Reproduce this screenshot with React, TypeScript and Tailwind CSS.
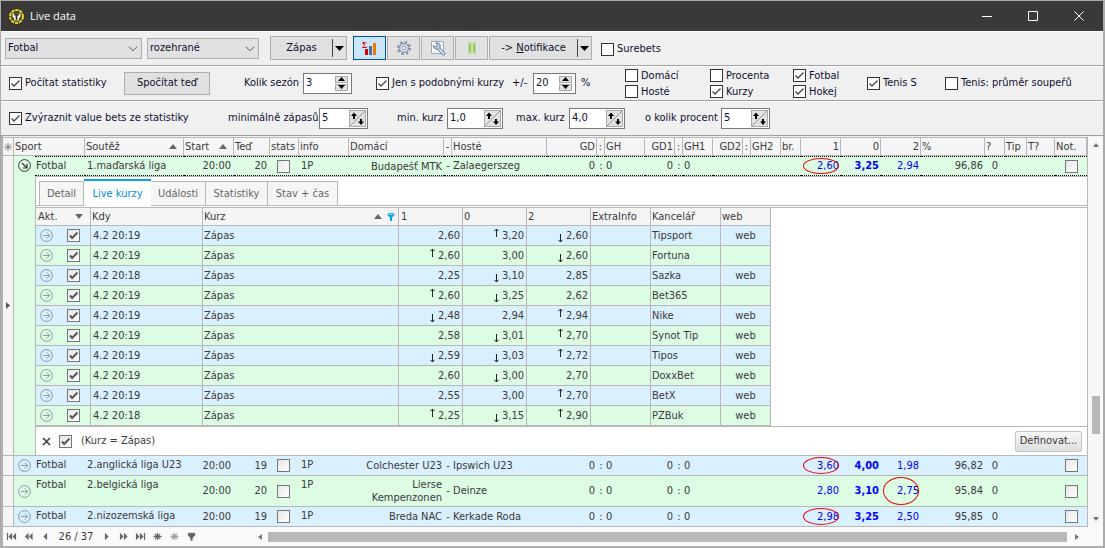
import type { ReactNode } from "react";

type Trend = "up" | "down" | "";

const columns = [
  { label: "Sport", width: "w-[50px]", align: "text-left" },
  { label: "Soutěž", width: "w-[99px]", align: "text-left", sort: true },
  { label: "Start", width: "w-[50px]", align: "text-left", sort: true },
  { label: "Teď", width: "w-[36px]", align: "text-left" },
  { label: "stats", width: "w-[29px]", align: "text-left" },
  { label: "info", width: "w-[50px]", align: "text-left" },
  { label: "Domácí", width: "w-[95px]", align: "text-left" },
  { label: "-", width: "w-[8px]", align: "text-center" },
  { label: "Hosté", width: "w-auto", align: "text-left" },
  { label: "GD", width: "w-[50px]", align: "text-right" },
  { label: ":", width: "w-[8px]", align: "text-center" },
  { label: "GH", width: "w-[40px]", align: "text-left" },
  { label: "GD1", width: "w-[30px]", align: "text-right" },
  { label: ":", width: "w-[8px]", align: "text-center" },
  { label: "GH1", width: "w-[30px]", align: "text-left" },
  { label: "GD2", width: "w-[30px]", align: "text-right" },
  { label: ":", width: "w-[8px]", align: "text-center" },
  { label: "GH2", width: "w-[30px]", align: "text-left" },
  { label: "br.", width: "w-[20px]", align: "text-left" },
  { label: "1", width: "w-[40px]", align: "text-right" },
  { label: "0", width: "w-[40px]", align: "text-right" },
  { label: "2", width: "w-[40px]", align: "text-right" },
  { label: "%", width: "w-[64px]", align: "text-left" },
  { label: "?", width: "w-[20px]", align: "text-left" },
  { label: "Tip", width: "w-[22px]", align: "text-left" },
  { label: "T?", width: "w-[28px]", align: "text-left" },
  { label: "Not.", width: "w-[32px]", align: "text-left" },
];

interface Match {
  league: string;
  minute: string;
  home: string;
  away: string;
  odds: [string, string, string];
  value: number;
  percent: string;
  height: string;
}

const selected: Match = {
  league: "1.maďarská liga",
  minute: "20",
  home: "Budapešť MTK",
  away: "Zalaegerszeg",
  odds: ["2,60", "3,25", "2,94"],
  value: 0,
  percent: "96,86",
  height: "h-[19px]",
};

const matches: Match[] = [
  { league: "2.anglická liga U23", minute: "19", home: "Colchester U23", away: "Ipswich U23", odds: ["3,60", "4,00", "1,98"], value: 0, percent: "96,82", height: "h-5" },
  { league: "2.belgická liga", minute: "20", home: "Lierse Kempenzonen", away: "Deinze", odds: ["2,80", "3,10", "2,75"], value: 2, percent: "95,84", height: "h-[31px]" },
  { league: "2.nizozemská liga", minute: "19", home: "Breda NAC", away: "Kerkade Roda", odds: ["2,98", "3,25", "2,50"], value: 0, percent: "95,85", height: "h-5" },
];

const prices: { time: string; odds: [string, Trend][]; office: string; web: boolean }[] = [
  { time: "4.2 20:19", odds: [["2,60", ""], ["3,20", "up"], ["2,60", "down"]], office: "Tipsport", web: true },
  { time: "4.2 20:19", odds: [["2,60", "up"], ["3,00", ""], ["2,60", "down"]], office: "Fortuna", web: false },
  { time: "4.2 20:18", odds: [["2,25", ""], ["3,10", "down"], ["2,85", ""]], office: "Sazka", web: true },
  { time: "4.2 20:19", odds: [["2,60", "up"], ["3,25", "down"], ["2,62", ""]], office: "Bet365", web: false },
  { time: "4.2 20:19", odds: [["2,48", "down"], ["2,94", ""], ["2,94", "up"]], office: "Nike", web: true },
  { time: "4.2 20:19", odds: [["2,58", ""], ["3,01", "down"], ["2,70", "up"]], office: "Synot Tip", web: true },
  { time: "4.2 20:19", odds: [["2,59", "down"], ["3,03", "down"], ["2,72", "up"]], office: "Tipos", web: true },
  { time: "4.2 20:19", odds: [["2,60", ""], ["3,00", "down"], ["2,70", ""]], office: "DoxxBet", web: true },
  { time: "4.2 20:19", odds: [["2,55", ""], ["3,00", ""], ["2,70", "up"]], office: "BetX", web: true },
  { time: "4.2 20:18", odds: [["2,25", "up"], ["3,15", "down"], ["2,90", "up"]], office: "PZBuk", web: true },
];

/* Controls */

function CheckBox({ label, checked = false }: { label: string; checked?: boolean }) {
  return (
    <label className="flex items-center gap-[3px] whitespace-nowrap">
      <span className="relative block size-[13px] shrink-0">
        <input type="checkbox" defaultChecked={checked} className="peer block size-[13px] appearance-none border border-[#333] bg-white" />
        <svg viewBox="0 0 13 13" className="pointer-events-none absolute inset-0 hidden peer-checked:block">
          <path d="M2.5 6.5 5 9l5.5-5.5" fill="none" stroke="#444" strokeWidth="1.3" />
        </svg>
      </span>
      {label}
    </label>
  );
}

function GridCheck({ label, checked = false }: { label: string; checked?: boolean }) {
  return (
    <span className="relative block size-[13px] shrink-0">
      <input
        type="checkbox"
        aria-label={label}
        defaultChecked={checked}
        className="peer block size-[13px] appearance-none border border-[#777] bg-gradient-to-br from-[#e6e6e6] to-white"
      />
      <svg viewBox="0 0 13 13" className="pointer-events-none absolute inset-0 hidden peer-checked:block">
        <path d="m3 6.5 2.2 2.5L10.5 3.5" fill="none" stroke="#555" strokeWidth="1.9" />
      </svg>
    </span>
  );
}

function Select({ label, value, width }: { label: string; value: string; width: string }) {
  return (
    <span className={`relative block ${width}`}>
      <select aria-label={label} className="h-[21px] w-full appearance-none border border-[#adadad] bg-[#e1e1e1] pl-[2px] pr-5">
        <option>{value}</option>
      </select>
      <svg viewBox="0 0 10 6" className="pointer-events-none absolute right-1 top-2 h-[6px] w-[10px]">
        <path d="m1 .8 4 4 4-4" fill="none" stroke="#555" />
      </svg>
    </span>
  );
}

function Spin({ label, value, width, diagonal = false }: { label: string; value: string; width: string; diagonal?: boolean }) {
  return (
    <span className={`flex h-[21px] shrink-0 border border-[#7a7a7a] bg-white ${width}`}>
      <input aria-label={label} defaultValue={value} className="h-[17px] w-full min-w-0 pl-[2px] outline-none" />
      {diagonal ? (
        <button aria-label="Změnit" className="mr-px mt-px h-[17px] w-[17px] shrink-0 border border-[#aaa] bg-[#e1e1e1]">
          <svg viewBox="0 0 15 15" className="block size-[15px]">
            <path d="M0 15 15 0" stroke="#999" />
            <path d="M4 8V4M11 8v4" stroke="#000" strokeWidth="2" />
            <path d="M1 5h6L4 1.5zM8 10.5h6L11 14z" />
          </svg>
        </button>
      ) : (
        <span className="mr-[3px] mt-[2px] flex w-[13px] shrink-0 flex-col gap-px">
          <button aria-label="Více" className="flex h-[7px] items-center justify-center border border-[#aaa] bg-[#e1e1e1]">
            <svg viewBox="0 0 7 4" className="h-1 w-[7px]"><path d="M0 4h7L3.5 0z" /></svg>
          </button>
          <button aria-label="Méně" className="flex h-[7px] items-center justify-center border border-[#aaa] bg-[#e1e1e1]">
            <svg viewBox="0 0 7 4" className="h-1 w-[7px]"><path d="M0 0h7L3.5 4z" /></svg>
          </button>
        </span>
      )}
    </span>
  );
}

function SplitButton({ children, width }: { children: ReactNode; width: string }) {
  return (
    <span className={`flex h-6 border border-[#adadad] bg-[#e1e1e1] ${width}`}>
      <button className="flex-1">{children}</button>
      <button aria-label="Rozbalit" className="my-[2px] flex w-[14px] items-center justify-center border-l border-[#444]">
        <svg viewBox="0 0 9 5" className="h-[5px] w-[9px]"><path d="M0 0h9L4.5 5z" /></svg>
      </button>
    </span>
  );
}

function ToolButton({ label, active = false, children }: { label: string; active?: boolean; children: ReactNode }) {
  return (
    <button
      aria-label={label}
      className={`flex h-6 w-[33px] items-center justify-center border ${active ? "border-[#005499] bg-[#cce4f7]" : "border-[#adadad] bg-[#e1e1e1]"}`}
    >
      {children}
    </button>
  );
}

/* Icons */

function SortArrow({ down = false }: { down?: boolean }) {
  return (
    <svg viewBox="0 0 8 5" className="h-[5px] w-2 shrink-0" fill="#666">
      <path d={down ? "M0 0h8L4 5z" : "M0 5h8L4 0z"} />
    </svg>
  );
}

function RowArrow({ open = false }: { open?: boolean }) {
  return (
    <svg viewBox="0 0 13 13" className={`size-[13px] shrink-0 ${open ? "text-[#333]" : "text-[#8a9ba3]"}`} fill="none" stroke="currentColor">
      <circle cx="6.5" cy="6.5" r="5.9" />
      {open ? <path d="m4 4 5 5M9 4.8V9H4.8" strokeWidth="1.2" /> : <path d="M3 6.5h6.5M6.8 3.5l3 3-3 3" />}
    </svg>
  );
}

function TrendArrow({ trend }: { trend: Trend }) {
  if (!trend) return null;
  return (
    <svg viewBox="0 0 5 9" className={`h-[9px] w-[5px] ${trend === "up" ? "mb-[6px]" : "mt-[6px]"}`} fill="none" stroke="#222">
      {trend === "up" ? <path d="M2.5 9V1M.3 3.3l2.2-2.3 2.2 2.3" /> : <path d="M2.5 0v8M.3 5.7 2.5 8l2.2-2.3" />}
    </svg>
  );
}

function NavButton({ label, d, faded = false }: { label: string; d: string; faded?: boolean }) {
  return (
    <button aria-label={label} className="flex w-[17px] justify-center">
      <svg viewBox="0 0 11 9" className={`h-[9px] w-[11px] ${faded ? "opacity-60" : ""}`} fill="#666" stroke="#666" strokeWidth=".2">
        <path d={d} />
      </svg>
    </button>
  );
}

const STAR = "M5 1h1v2.3L7.8 1.8l.7.7L7 4h2.5v1H7l1.5 1.5-.7.7L6 5.7V8H5V5.7L3.2 7.2l-.7-.7L4 5H1.5V4H4L2.5 2.5l.7-.7L5 3.3z";

function TitleBar() {
  return (
    <header className="flex h-[30px] items-center bg-[#393939] pl-[7px] pr-px text-white">
      <svg viewBox="0 0 17 17" className="size-[17px]">
        <circle cx="8.5" cy="8.5" r="8" fill="#2a2606" />
        <circle cx="8.5" cy="8.5" r="6.4" fill="none" stroke="#e6cf2e" strokeWidth="2.2" strokeDasharray="3.4 .6" />
        <circle cx="8.5" cy="8.5" r="5" fill="#4a4206" />
        <path d="M4.5 5.5h8v3.5l-1.500 1v2.500h-5V10L4.500 9z" fill="#fff" />
        <path d="M6 6.500h5M8.500 6.500v5.500" stroke="#333" strokeWidth="1.800" />
      </svg>
      <h1 className="ml-[5px] flex-1 font-['Open_Sans','Noto_Sans',sans-serif] text-[11px]">Live data</h1>
      {[
        ["Minimalizovat", "M0 5.5h10"],
        ["Maximalizovat", "M.5.5h9v9h-9z"],
        ["Zavřít", "M.5.5l9 9M9.5.5l-9 9"],
      ].map(([label, d]) => (
        <button key={label} aria-label={label} className="flex w-[46px] items-center justify-center">
          <svg viewBox="0 0 10 10" className="size-[10px]" fill="none" stroke="#fff"><path d={d} /></svg>
        </button>
      ))}
    </header>
  );
}

function Toolbar() {
  return (
    <div className="flex h-[35px] items-center border-b border-[#a0a0a0] pl-1 shadow-[inset_0_1px_0_#fff]">
      <Select label="Sport" value="Fotbal" width="w-[137px]" />
      <div className="ml-[5px]"><Select label="Stav" value="rozehrané" width="w-[112px]" /></div>
      <div className="ml-[11px]"><SplitButton width="w-[77px]">Zápas</SplitButton></div>
      <div className="ml-[6px] flex gap-px">
        <ToolButton label="Statistiky" active>
          <svg viewBox="0 0 15 15" className="size-[15px]">
            <text x="0" y="7" fontSize="8" fontWeight="bold" fill="#c00" fontFamily="Liberation Serif, serif">Σ</text>
            <path d="M3 8h3v6H3z" fill="#d00" />
            <path d="M7 5h3v9H7z" fill="#4472a8" />
            <path d="M11 2h3v12h-3z" fill="#f07800" />
          </svg>
        </ToolButton>
        <ToolButton label="Nastavení">
          <svg viewBox="0 0 16 16" className="size-4">
            <circle cx="8" cy="8" r="6" fill="none" stroke="#8392ab" strokeWidth="2.2" strokeDasharray="2.4 2.312" />
            <circle cx="8" cy="8" r="4.4" fill="#e6ebf2" stroke="#8392ab" strokeWidth="1.2" />
            <circle cx="8" cy="8" r="2" fill="#f4f4f4" stroke="#8392ab" />
          </svg>
        </ToolButton>
        <ToolButton label="Nástroje">
          <svg viewBox="0 0 16 16" className="size-4">
            <path d="M1.5 1.5h12v12h-12z" fill="#f6f8fb" stroke="#9aa9c0" />
            <path d="m8 8 5.5 5.5" stroke="#667b9e" strokeWidth="3.6" strokeLinecap="round" />
            <path d="m8 8 5.5 5.5" stroke="#dbe4f1" strokeWidth="1.8" strokeLinecap="round" />
            <path d="M6 2.8c2.5-.6 4.7 1.4 4.2 3.8C9.8 9.1 7 10 5 8.7 3.8 8 3.2 6.8 3.4 5.4l2.3 1.7 1.7-1.4z" fill="#c5d2e5" stroke="#667b9e" />
          </svg>
        </ToolButton>
        <ToolButton label="Pozastavit">
          <svg viewBox="0 0 8 12" className="h-3 w-2" fill="#94c45a" stroke="#b5d68c">
            <path d="M.5 1h2.500v10H.5zM5 1h2.500v10H5z" />
          </svg>
        </ToolButton>
        <SplitButton width="w-[103px]">-&gt; <u>N</u>otifikace</SplitButton>
      </div>
      <div className="ml-[9px] mt-[2px]"><CheckBox label="Surebets" /></div>
    </div>
  );
}

function StatsBar() {
  return (
    <div className="flex h-[35px] items-center whitespace-nowrap border-b border-[#a0a0a0] pl-2 shadow-[inset_0_1px_0_#fff]">
      <div className="w-[115px]"><CheckBox label="Počítat statistiky" checked /></div>
      <button className="h-[23px] w-[86px] border border-[#adadad] bg-[#e1e1e1]">Spočítat teď</button>
      <span className="ml-[34px] w-[59px]">Kolik sezón</span>
      <Spin label="Kolik sezón" value="3" width="w-[49px]" />
      <div className="ml-6 w-[136px]"><CheckBox label="Jen s podobnými kurzy" checked /></div>
      <span className="w-[21px]">+/-</span>
      <Spin label="Odchylka kurzu" value="20" width="w-[43px]" />
      <span className="ml-[5px] w-[44px]">%</span>
      <div className="grid w-[242px] grid-cols-[85px_83px_74px] gap-y-[3px] leading-[13px]">
        <CheckBox label="Domácí" />
        <CheckBox label="Procenta" />
        <CheckBox label="Fotbal" checked />
        <CheckBox label="Hosté" />
        <CheckBox label="Kurzy" checked />
        <CheckBox label="Hokej" checked />
      </div>
      <div className="w-[78px]"><CheckBox label="Tenis S" checked /></div>
      <CheckBox label="Tenis: průměr soupeřů" />
    </div>
  );
}

function ValueBar() {
  return (
    <div className="flex h-[35px] items-center whitespace-nowrap border-b border-[#a0a0a0] pl-2 shadow-[inset_0_1px_0_#fff]">
      <div className="w-[219px]"><CheckBox label="Zvýraznit value bets ze statistiky" checked /></div>
      <span className="w-[91px]">minimálně zápasů</span>
      <Spin label="minimálně zápasů" value="5" width="w-[49px]" diagonal />
      <span className="ml-[29px] w-[50px]">min. kurz</span>
      <Spin label="min. kurz" value="1,0" width="w-[56px]" diagonal />
      <span className="ml-[13px] w-[53px]">max. kurz</span>
      <Spin label="max. kurz" value="4,0" width="w-[56px]" diagonal />
      <span className="ml-[20px] w-[76px]">o kolik procent</span>
      <Spin label="o kolik procent" value="5" width="w-[49px]" diagonal />
    </div>
  );
}

/* Grid */

function OddsCell({ value, edge, bold = false, marked = false }: { value: string; edge: string; bold?: boolean; marked?: boolean }) {
  return (
    <td className={`relative pr-[2px] text-right text-[#0000ff] ${edge} ${bold ? "font-bold" : ""}`}>
      {value}
      {marked && <span className="absolute inset-x-[2px] inset-y-px rounded-[50%] border border-[#f00000]" />}
    </td>
  );
}

function MatchCells({ match, edge }: { match: Match; edge: string }) {
  return (
    <>
      <td className={`pl-px align-top leading-[18px] ${edge}`}>Fotbal</td>
      <td className={`pl-[2px] align-top leading-[18px] ${edge}`}>{match.league}</td>
      <td className={`pr-[3px] text-right ${edge}`}>20:00</td>
      <td className={`pr-[3px] text-right ${edge}`}>{match.minute}</td>
      <td className={`pl-[7px] ${edge}`}><GridCheck label="stats" /></td>
      <td className={`pl-[2px] align-top leading-[18px] ${edge}`}>1P</td>
      <td className={`whitespace-normal pr-[2px] text-right leading-[13px] ${edge}`}>{match.home}</td>
      <td className={`text-center ${edge}`}>-</td>
      <td className={`pl-px ${edge}`}>{match.away}</td>
      <td className={`pr-[2px] text-right ${edge}`}>0</td>
      <td className={`text-center ${edge}`}>:</td>
      <td className={`pl-px ${edge}`}>0</td>
      <td className={`pr-[2px] text-right ${edge}`}>0</td>
      <td className={`text-center ${edge}`}>:</td>
      <td className={`pl-px ${edge}`}>0</td>
      <td colSpan={4} className={edge} />
      {match.odds.map((value, i) => (
        <OddsCell key={i} value={value} edge={edge} bold={i === 1} marked={i === match.value} />
      ))}
      <td className={`pr-[2px] text-right ${edge}`}>{match.percent}</td>
      <td className={`text-center ${edge}`}>0</td>
      <td colSpan={2} className={edge} />
      <td className={`pl-[10px] ${edge}`}><GridCheck label="Not." /></td>
    </>
  );
}

function PriceTable() {
  const head = "border-b border-r border-[#b8b8b8] bg-[#f5f5f5] px-px text-left font-normal";
  const cell = "border-b border-r border-[#b8b8b8] px-px";
  return (
    <table className="w-[735px] table-fixed border-separate border-spacing-0">
      <thead>
        <tr className="h-[18px]">
          <th className={`w-[55px] ${head}`}>
            <span className="flex items-center justify-between pl-px pr-[6px]">Akt.<SortArrow down /></span>
          </th>
          <th className={`w-[112px] ${head}`}>Kdy</th>
          <th className={`w-[196px] ${head}`}>
            <span className="flex items-center gap-[5px] pr-[2px]">
              <span className="flex-1">Kurz</span>
              <SortArrow />
              <svg viewBox="0 0 8 8" className="size-2" fill="none" stroke="#00a2e8">
                <ellipse cx="4" cy="1.5" rx="3.4" ry="1" />
                <path d="m.6 1.8 2.9 2.7V8h1V4.500l2.900-2.700" fill="#00a2e8" />
              </svg>
            </span>
          </th>
          <th className={`w-[64px] pl-[2px] ${head}`}>1</th>
          <th className={`w-[64px] ${head}`}>0</th>
          <th className={`w-[64px] ${head}`}>2</th>
          <th className={`w-[60px] ${head}`}>ExtraInfo</th>
          <th className={`w-[70px] ${head}`}>Kancelář</th>
          <th className={`w-[50px] ${head}`}>web</th>
        </tr>
      </thead>
      <tbody>
        {prices.map((price) => (
          <tr key={price.office} className="h-5 odd:bg-[#d9f0ff] even:bg-[#dcfce4]">
            <td className={cell}>
              <span className="flex items-center gap-[14px] pl-[3px]">
                <RowArrow />
                <GridCheck label={price.office} checked />
              </span>
            </td>
            <td className={`pl-[2px] ${cell}`}>{price.time}</td>
            <td className={cell}>Zápas</td>
            {price.odds.map(([value, trend], i) => (
              <td key={i} className={cell}>
                <span className="flex h-[18px] items-center justify-end gap-[3px] pr-px">
                  <TrendArrow trend={trend} />
                  {value}
                </span>
              </td>
            ))}
            <td className={cell} />
            <td className={cell}>{price.office}</td>
            <td className={`text-center ${cell}`}>{price.web && <a href="#">web</a>}</td>
          </tr>
        ))}
      </tbody>
    </table>
  );
}

function Detail() {
  const tabs = [
    { name: "Detail", width: "w-[45px]" },
    { name: "Live kurzy", width: "w-[67px]" },
    { name: "Události", width: "w-[55px]" },
    { name: "Statistiky", width: "w-[62px]" },
    { name: "Stav + čas", width: "w-[70px]" },
  ];
  return (
    <div className="border-l border-[#b8b8b8] bg-white">
      <div role="tablist" className="flex h-[29px] items-end border-b border-[#b8b8b8] pl-[3px] text-[#666]">
        {tabs.map((tab, i) => (
          <button
            key={tab.name}
            role="tab"
            aria-selected={i === 1}
            className={
              i === 1
                ? `-mb-px h-[27px] border-t-2 border-[#00a2f0] bg-white text-[#0090d8] ${tab.width}`
                : `h-6 border-r border-t border-[#b8b8b8] bg-[#f5f5f5] first:border-l ${tab.width}`
            }
          >
            {tab.name}
          </button>
        ))}
      </div>
      <div className="mt-px border-b border-t border-[#b8b8b8]">
        <PriceTable />
      </div>
      <div className="flex h-[28px] items-center pl-[6px] pr-[5px]">
        <button aria-label="Zrušit filtr">
          <svg viewBox="0 0 9 9" className="size-[9px]" stroke="#444" strokeWidth="1.7"><path d="m1 1 7 7M8 1 1 8" /></svg>
        </button>
        <div className="ml-2"><GridCheck label="Filtr zapnutý" checked /></div>
        <span className="ml-[9px] flex-1">(Kurz = Zápas)</span>
        <button className="h-[21px] w-[67px] rounded-[2px] border border-[#c4c4c4] bg-gradient-to-b from-[#f6f6f6] to-[#dedede]">Definovat...</button>
      </div>
    </div>
  );
}

function MatchGrid() {
  const line = "border-b border-[#b8b8b8]";
  const focus = "border-y border-dotted border-black";
  return (
    <table className="w-full table-fixed border-separate border-spacing-0 whitespace-nowrap border-t border-[#b8b8b8] text-[#3a3a3a]">
      <colgroup>
        <col className="w-[11px]" />
        <col className="w-[21px]" />
        {columns.map((column, i) => (
          <col key={i} className={column.width} />
        ))}
      </colgroup>
      <thead>
        <tr className="h-[18px] bg-[#f5f5f5]">
          <th className={`border-r font-normal ${line}`}>
            <svg viewBox="0 0 9 9" className="mx-auto size-2" stroke="#666" strokeWidth=".8"><path d="M4.5 0v9M0 4.5h9M1.3 1.3l6.4 6.4M7.7 1.3 1.3 7.7" /></svg>
          </th>
          {columns.map((column, i) => (
            <th key={i} colSpan={i === 0 ? 2 : 1} className={`border-r px-px font-normal ${line} ${column.align}`}>
              {column.sort ? (
                <span className="flex items-center justify-between pr-[5px]">{column.label}<SortArrow /></span>
              ) : (
                column.label
              )}
            </th>
          ))}
        </tr>
      </thead>
      <tbody>
        <tr className={`bg-[#dcfce4] ${selected.height}`}>
          <td rowSpan={2} className={`border-r bg-[#f5f5f5] ${line}`}>
            <svg viewBox="0 0 4 7" className="mx-auto h-[7px] w-1" fill="#555"><path d="M0 0v7l4-3.5z" /></svg>
          </td>
          <td rowSpan={2} className={`pl-1 pt-[3px] align-top ${line}`}><RowArrow open /></td>
          <MatchCells match={selected} edge={focus} />
        </tr>
        <tr>
          <td colSpan={27} className={`border-t ${line}`}><Detail /></td>
        </tr>
        {matches.map((match) => (
          <tr key={match.league} className={`odd:bg-[#d9f0ff] even:bg-[#dcfce4] ${match.height}`}>
            <td className={`border-r bg-[#f5f5f5] ${line}`} />
            <td className={`pl-1 ${line}`}><RowArrow /></td>
            <MatchCells match={match} edge={line} />
          </tr>
        ))}
      </tbody>
    </table>
  );
}

function ScrollTrack() {
  return (
    <div className="flex w-4 shrink-0 flex-col items-center border-l border-[#b8b8b8] bg-[#f8f8f8] py-[6px]">
      <svg viewBox="0 0 6 4" className="h-1 w-[6px]" fill="#777"><path d="M0 4h6L3 0z" /></svg>
      <div className="grow-[247]" />
      <div className="h-[38px] w-2 bg-[#b8b8b8]" />
      <div className="grow-[83]" />
      <svg viewBox="0 0 6 4" className="h-1 w-[6px]" fill="#777"><path d="M0 0h6L3 4z" /></svg>
    </div>
  );
}

function Navigator() {
  return (
    <footer className="flex h-[19px] items-center bg-[#fafafa] text-[#3a3a3a]">
      <NavButton label="První" d="M1 1h1v7H1zM6 1v7L2.5 4.5zM10 1v7L6.5 4.5z" />
      <NavButton label="Předchozí strana" d="M5.5 1v7L2 4.5zM9.5 1v7L6 4.5z" />
      <NavButton label="Předchozí" d="M7 1v7L3.5 4.5z" />
      <span className="w-[44px] text-center">26 / 37</span>
      <NavButton label="Další" d="M4 1v7l3.5-3.5z" />
      <NavButton label="Další strana" d="M2 1v7l3.5-3.5zM6 1v7l3.5-3.5z" />
      <NavButton label="Poslední" d="M1 1v7l3.5-3.5zM5 1v7l3.5-3.5zM9 1h1v7H9z" />
      <NavButton label="Nový" d={STAR} />
      <NavButton label="Kopie" d={STAR} faded />
      <NavButton label="Filtr" d="M2 1h7v2.5L6.5 6v2.5h-2V6L2 3.5z" />
      <div className="ml-[58px] flex flex-1 items-center pr-[24px]">
        <svg viewBox="0 0 4 6" className="h-[6px] w-1" fill="#777"><path d="M4 0v6L0 3z" /></svg>
        <div className="ml-[6px] mr-2 h-[10px] flex-1 bg-[#b8b8b8]" />
        <svg viewBox="0 0 4 6" className="h-[6px] w-1" fill="#777"><path d="M0 0v6l4-3z" /></svg>
      </div>
    </footer>
  );
}

export default function App() {
  return (
    <div className="border-l border-r-2 border-t border-[#aaa] bg-[#f0f0f0] font-['DejaVu_Sans_Condensed','Noto_Sans',sans-serif] text-[11px] leading-4 text-[#101030]">
      <TitleBar />
      <Toolbar />
      <StatsBar />
      <ValueBar />
      <main className="border-b-2 border-l-2 border-[#b0b0b0] pt-px">
        <div className="flex">
          <div className="min-w-0 flex-1"><MatchGrid /></div>
          <ScrollTrack />
        </div>
        <Navigator />
      </main>
    </div>
  );
}
